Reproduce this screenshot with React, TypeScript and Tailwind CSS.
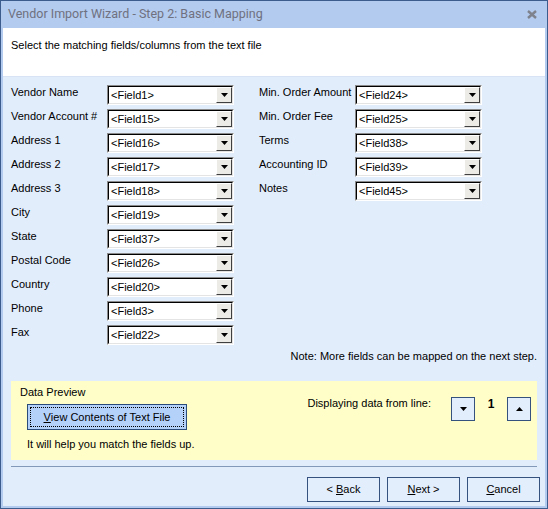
import React from 'react';

const leftFields: [string, string][] = [
  ['Vendor Name', '<Field1>'],
  ['Vendor Account #', '<Field15>'],
  ['Address 1', '<Field16>'],
  ['Address 2', '<Field17>'],
  ['Address 3', '<Field18>'],
  ['City', '<Field19>'],
  ['State', '<Field37>'],
  ['Postal Code', '<Field26>'],
  ['Country', '<Field20>'],
  ['Phone', '<Field3>'],
  ['Fax', '<Field22>'],
];

const rightFields: [string, string][] = [
  ['Min. Order Amount', '<Field24>'],
  ['Min. Order Fee', '<Field25>'],
  ['Terms', '<Field38>'],
  ['Accounting ID', '<Field39>'],
  ['Notes', '<Field45>'],
];

const Triangle = ({ up = false }: { up?: boolean }) => (
  <svg width="7" height="4" viewBox="0 0 7 4" className="block">
    {up ? <path d="M3.5 0 L7 4 L0 4 Z" fill="#000" /> : <path d="M0 0 L7 0 L3.5 4 Z" fill="#000" />}
  </svg>
);

const Combo = ({ value }: { value: string }) => (
  <div className="w-[127px] h-[20px] border border-t-[#8a8a8a] border-l-[#8a8a8a] border-b-white border-r-white">
    <div className="h-full flex items-stretch bg-white border border-t-black border-l-black border-b-[#e4e4e4] border-r-[#e4e4e4]">
      <span className="flex-1 pl-[2px] text-[11px] leading-[16px] text-black">{value}</span>
      <div className="w-[16px] border border-t-white border-l-white border-b-[#404040] border-r-[#404040] bg-[#ecebe6] flex items-center justify-center">
        <Triangle />
      </div>
    </div>
  </div>
);

const FieldRow = ({ label, value }: { label: string; value: string }) => (
  <div className="flex items-start">
    <span className="w-[96px] text-[11px] leading-[14px] text-black">{label}</span>
    <Combo value={value} />
  </div>
);

const WinButton = ({ children }: { children: React.ReactNode }) => (
  <button className="w-[73px] h-[25px] border border-[#35527f] bg-[#e3eefc] text-[11px] text-black flex items-center justify-center">
    {children}
  </button>
);

const SpinButton = ({ up = false }: { up?: boolean }) => (
  <button className="w-[24px] h-[24px] border border-[#35527f] bg-[#e3eefc] flex items-center justify-center">
    <Triangle up={up} />
  </button>
);

export default function App() {
  return (
    <div
      className="w-[548px] h-[509px] border border-[#3d5c8e] bg-[#b3cbef] flex flex-col"
      style={{ fontFamily: '"Liberation Sans", Arial, sans-serif' }}
    >
      {/* title bar */}
      <div className="h-[27px] flex items-center justify-between pl-[7px] pr-[10px] shrink-0">
        <span className="text-[12.5px] text-[#6f7180]" style={{ fontFamily: 'Roboto, "Noto Sans", sans-serif' }}>
          Vendor Import Wizard - Step 2: Basic Mapping
        </span>
        <svg width="10" height="9" viewBox="0 0 10 9">
          <path d="M1 1 L9 8 M9 1 L1 8" stroke="#7d828c" strokeWidth="2.4" />
        </svg>
      </div>

      <div className="flex-1 mx-[2px] mb-[2px] bg-[#e2edfc] flex flex-col">
        {/* header */}
        <div className="h-[49px] bg-white px-[8px] pt-[10px] text-[11px] leading-[14px] text-black border-b border-[#d8e4f6]">
          Select the matching fields/columns from the text file
        </div>

        <div className="flex-1 flex flex-col px-[8px] pt-[8px] pb-[3px]">
          <div className="flex items-start gap-[25px]">
            <div className="flex flex-col gap-[4px]">
              {leftFields.map(([l, v]) => (
                <FieldRow key={l} label={l} value={v} />
              ))}
            </div>
            <div className="flex flex-col gap-[4px]">
              {rightFields.map(([l, v]) => (
                <FieldRow key={l} label={l} value={v} />
              ))}
            </div>
          </div>

          <div className="mt-[4px] text-right text-[11px] leading-[14px] text-black">
            Note: More fields can be mapped on the next step.
          </div>

          {/* data preview */}
          <div className="mt-[18px] h-[79px] bg-[#fffec8] flex justify-between pl-[9px] pr-[6px]">
            <div className="flex flex-col">
              <span className="pt-[4px] text-[11px] leading-[14px] text-black">Data Preview</span>
              <button className="mt-[5px] ml-[7px] w-[160px] h-[26px] border border-[#2b4b79] bg-[#b4d1fa] p-[2px]">
                <span className="h-full flex items-center justify-center border border-dotted border-black text-[11px] text-black">
                  <span className="underline">V</span>iew Contents of Text File
                </span>
              </button>
              <span className="mt-[7px] ml-[7px] text-[11px] leading-[14px] text-black">It will help you match the fields up.</span>
            </div>
            <div className="flex items-start pt-[16px]">
              <span className="mt-[-1px] text-[11px] leading-[14px] text-black">Displaying data from line:</span>
              <div className="ml-[20px]">
                <SpinButton />
              </div>
              <span className="w-[32px] text-center font-bold text-[12px] leading-[14px] text-black">1</span>
              <SpinButton up />
            </div>
          </div>

          <div className="mt-[6px] h-[1px] bg-[#8299b9]" />

          <div className="mt-[10px] flex justify-end gap-[7px] -mr-[3px]">
            <WinButton>
              &lt; <span className="underline ml-[3px]">B</span>ack
            </WinButton>
            <WinButton>
              <span className="underline">N</span>ext &gt;
            </WinButton>
            <WinButton>
              <span className="underline">C</span>ancel
            </WinButton>
          </div>
        </div>
      </div>
    </div>
  );
}
